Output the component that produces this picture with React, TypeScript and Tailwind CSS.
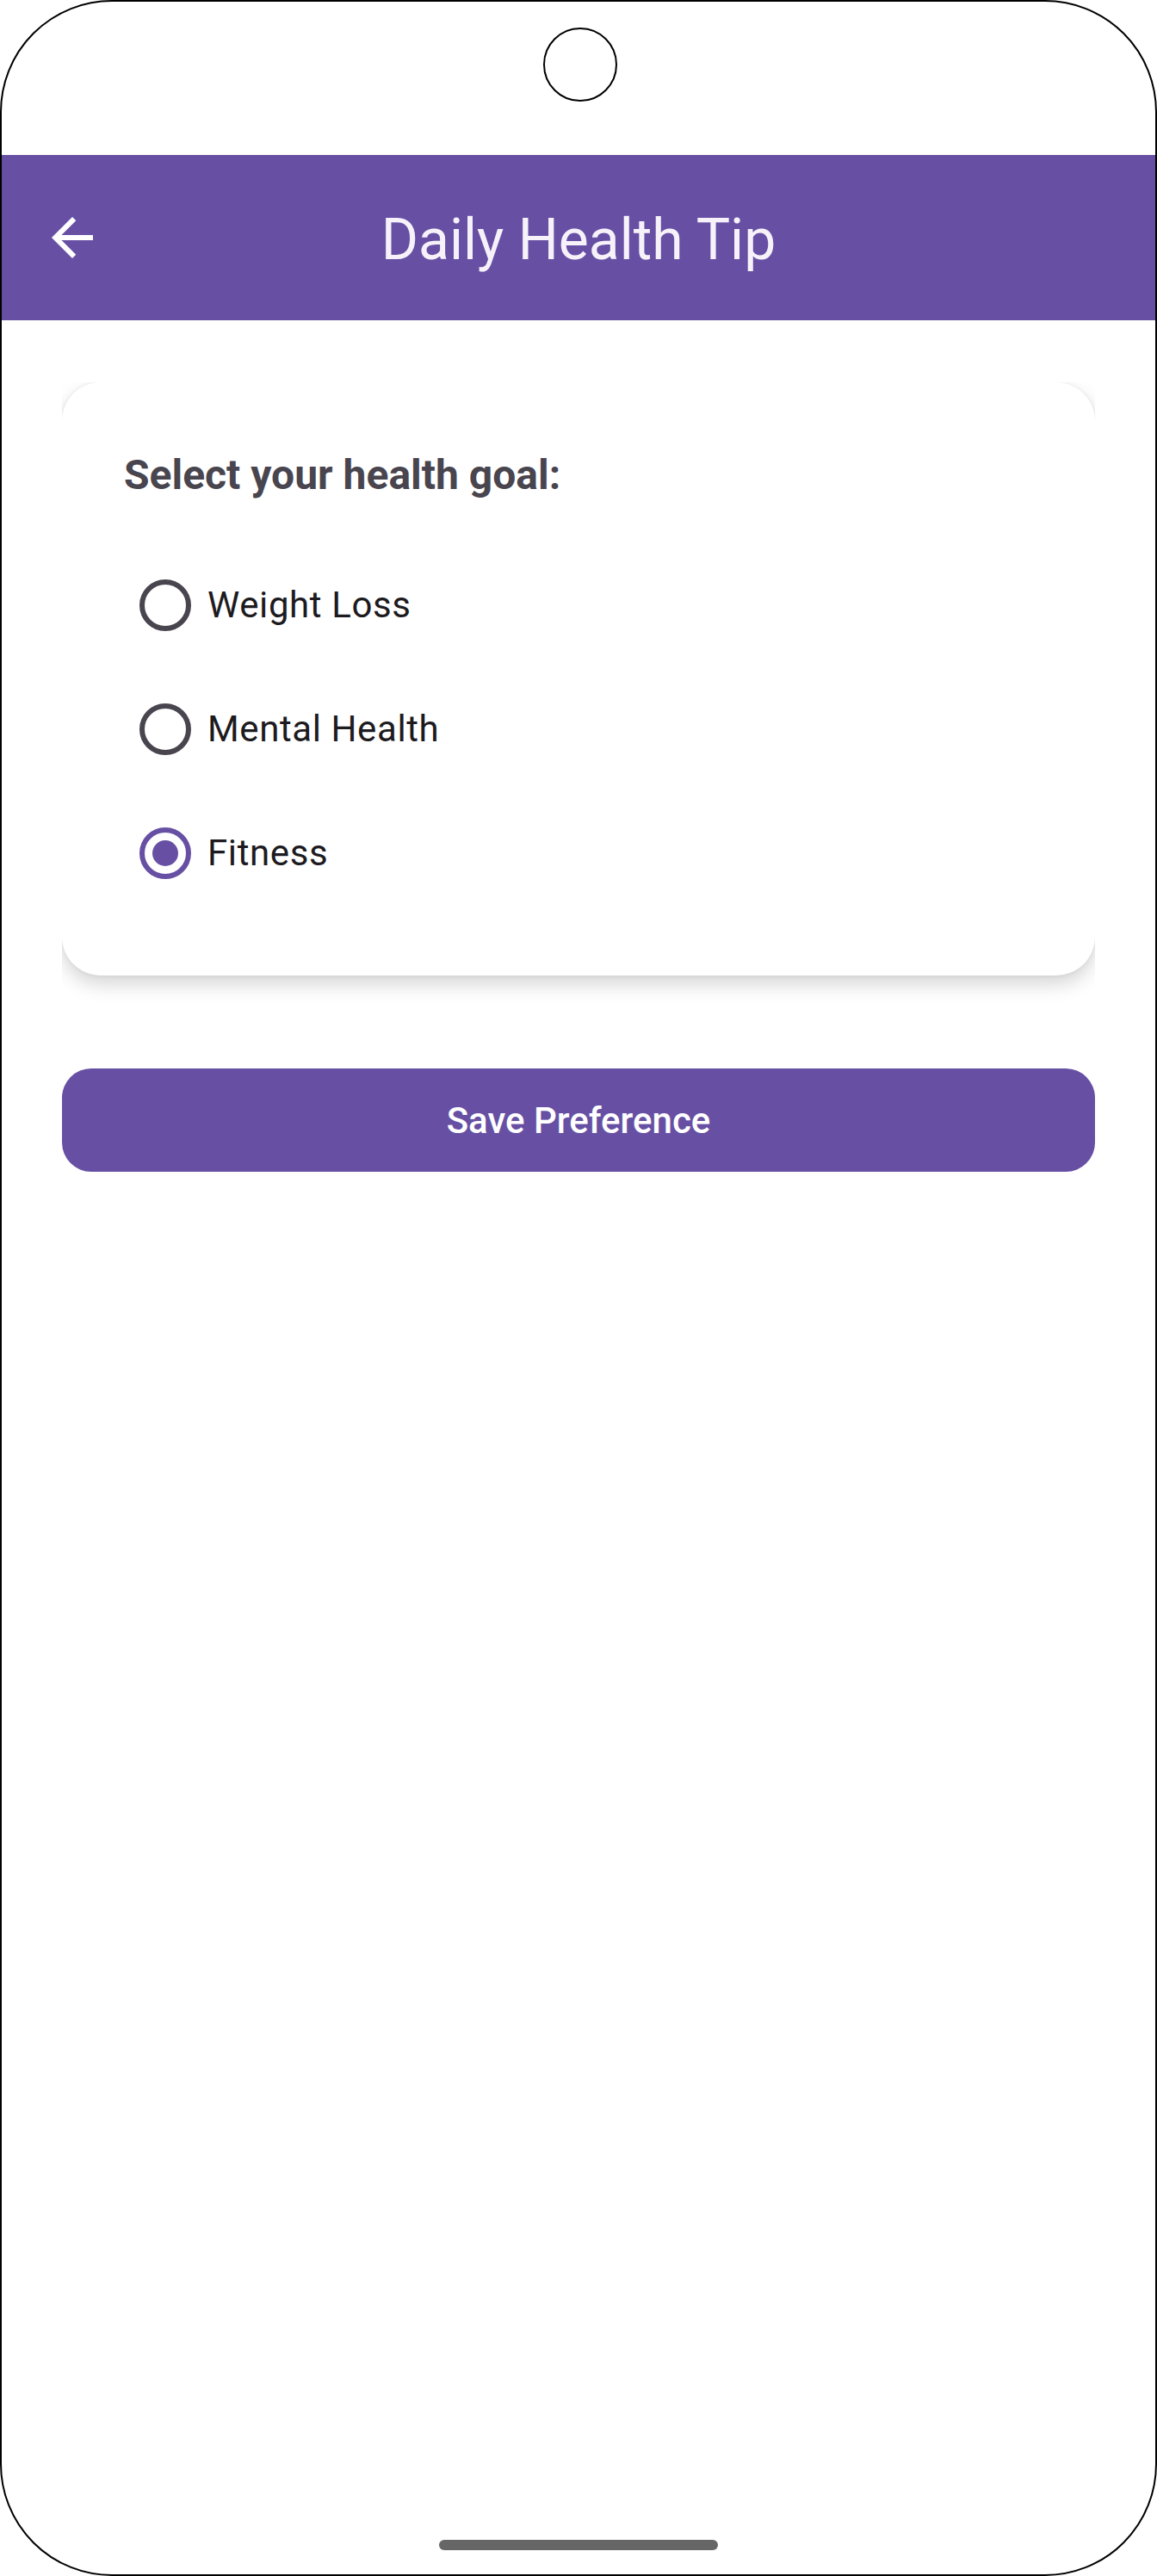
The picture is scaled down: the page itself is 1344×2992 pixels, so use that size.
import React from "react";

function Radio({ selected }: { selected?: boolean }) {
  return selected ? (
    <div className="w-[60px] h-[60px] rounded-full border-[6px] border-[#6750A4] flex items-center justify-center">
      <div className="w-[30px] h-[30px] rounded-full bg-[#6750A4]" />
    </div>
  ) : (
    <div className="w-[60px] h-[60px] rounded-full border-[6px] border-[#49454F]" />
  );
}

const options = [
  { label: "Weight Loss", selected: false },
  { label: "Mental Health", selected: false },
  { label: "Fitness", selected: true },
];

export default function App() {
  return (
    <div className="w-[1344px] h-[2992px] bg-white font-[Roboto,sans-serif]">
      <div className="relative w-[1344px] h-[2992px] border-2 border-black rounded-[130px] overflow-hidden bg-white flex flex-col">
        {/* camera */}
        <div className="absolute left-[629px] top-[30px] w-[86px] h-[86px] rounded-full border-2 border-black" />

        <div className="h-[178px] shrink-0" />

        {/* top app bar */}
        <div className="h-[192px] shrink-0 bg-[#6750A4] grid grid-cols-[1fr_auto_1fr] items-center -mx-[2px]">
          <div className="pl-[48px] flex items-center">
            <svg width="72" height="72" viewBox="0 0 24 24" fill="#ffffff">
              <path d="M20 11H7.83l5.59-5.59L12 4l-8 8 8 8 1.41-1.41L7.83 13H20v-2z" />
            </svg>
          </div>
          <div className="text-[66px] leading-[88px] text-[#f7f2fa] pt-[6px]">Daily Health Tip</div>
          <div />
        </div>

        {/* content */}
        <div className="px-[70px] pt-[72px] flex flex-col">
          <div className="overflow-hidden pb-[44px]">
            <div className="bg-white rounded-[45px] shadow-[0_10px_22px_rgba(0,0,0,0.17),0_0_5px_rgba(0,0,0,0.07)] px-[72px] pt-[72px] pb-[70px]">
              <div className="text-[48px] leading-[72px] font-bold text-[#49454F]">Select your health goal:</div>
              <div className="mt-[43px] flex flex-col">
                {options.map((o) => (
                  <div key={o.label} className="h-[144px] flex items-center">
                    <div className="pl-[18px]">
                      <Radio selected={o.selected} />
                    </div>
                    <div className="ml-[19px] text-[42px] tracking-[0.6px] text-[#1D1B20] leading-[56px]">{o.label}</div>
                  </div>
                ))}
              </div>
            </div>
          </div>

          <button className="mt-[64px] h-[120px] w-full rounded-[34px] bg-[#6750A4] text-white text-[42px] font-medium flex items-center justify-center">
            Save Preference
          </button>
        </div>

        {/* home indicator */}
        <div className="absolute left-[508px] bottom-[28px] w-[324px] h-[12px] rounded-full bg-[#666666]" />
      </div>
    </div>
  );
}
